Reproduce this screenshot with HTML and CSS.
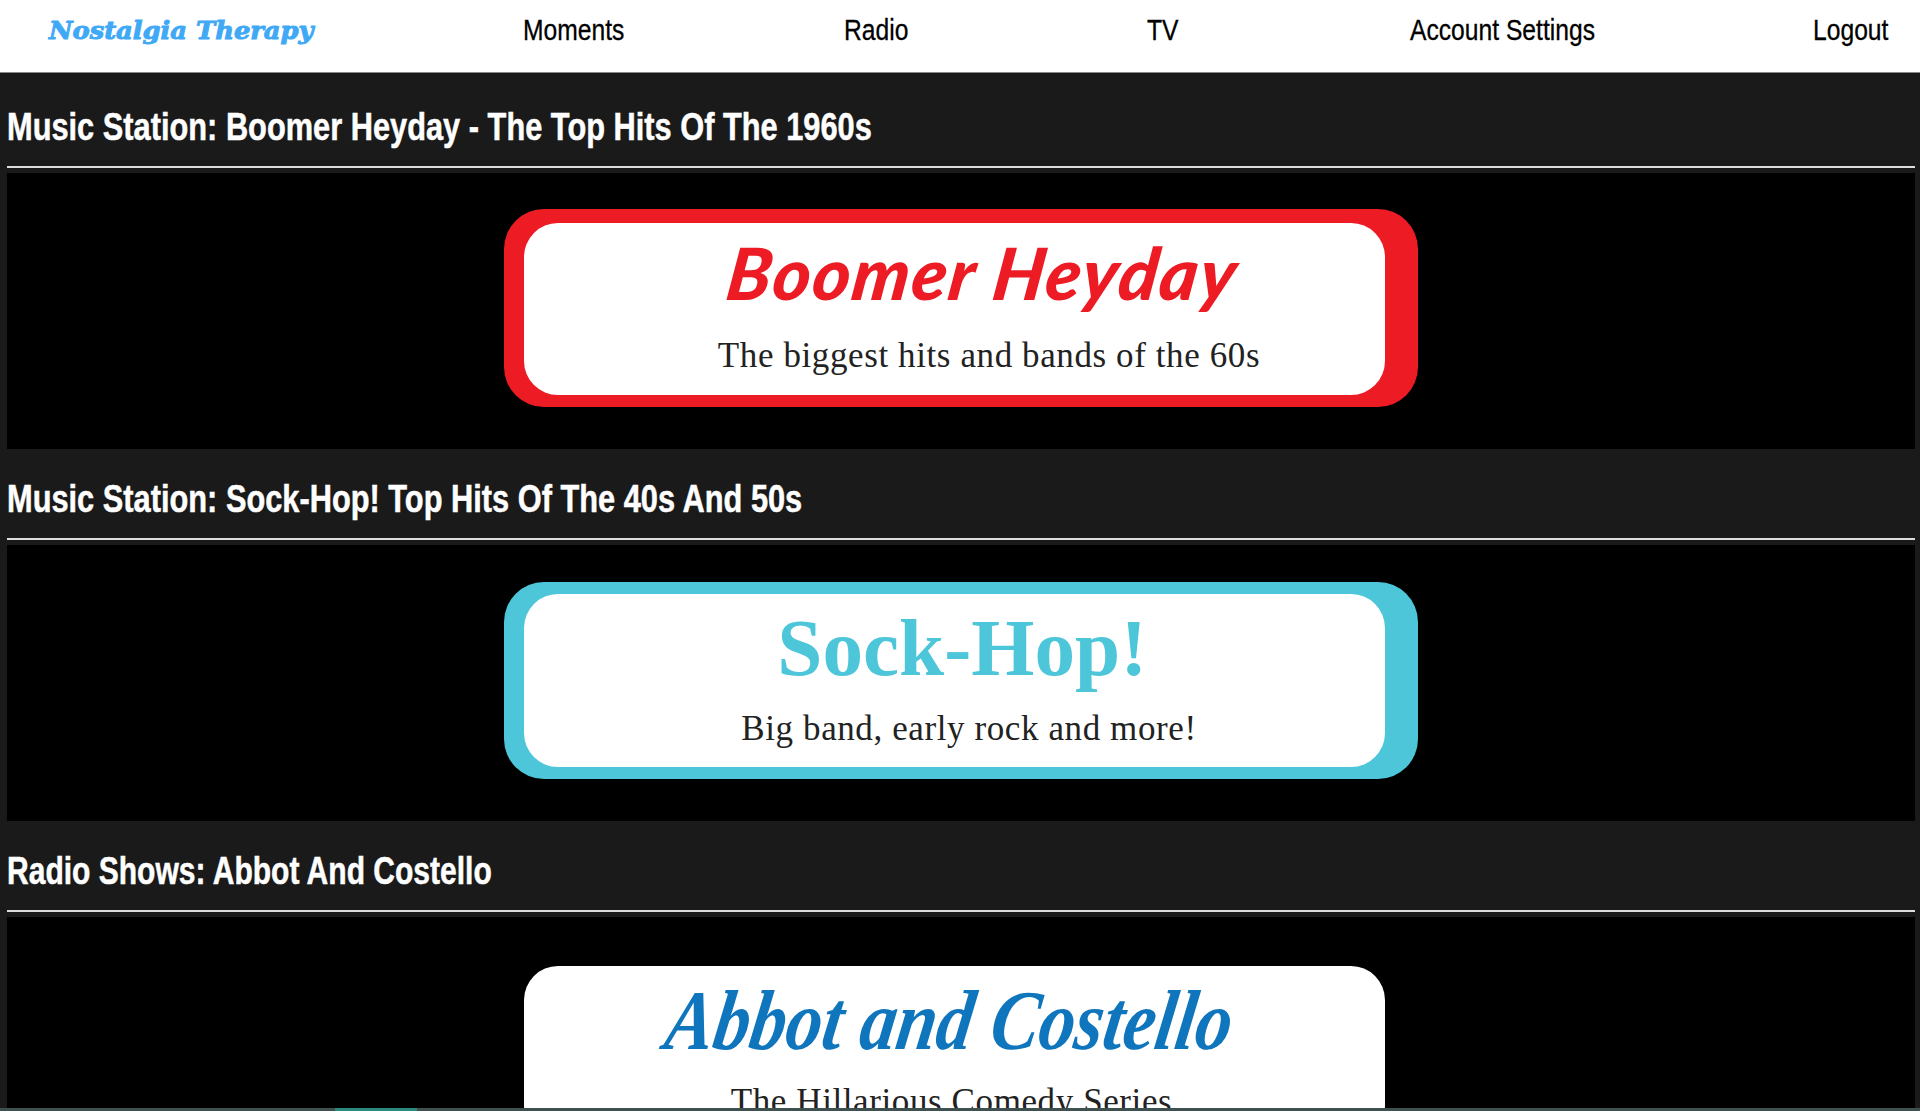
FILE: index.html
```html
<!DOCTYPE html>
<html lang="en">
<head>
  <meta charset="UTF-8">
  <title>Nostalgia Therapy</title>
  <link rel="stylesheet" href="styles.css">
</head>
<body>

  <nav class="topnav">
    <a class="brand" href="#"><span>Nostalgia Therapy</span></a>
    <a class="nav-link" href="#"><span>Moments</span></a>
    <a class="nav-link" href="#"><span>Radio</span></a>
    <a class="nav-link" href="#"><span>TV</span></a>
    <a class="nav-link" href="#"><span>Account Settings</span></a>
    <a class="nav-link" href="#"><span>Logout</span></a>
  </nav>

  <main class="content">
    <section class="station">
      <h2 class="station-title"><span>Music Station: Boomer Heyday - The Top Hits Of The 1960s</span></h2>
      <div class="station-banner">
        <div class="card card-red">
          <div class="card-inner">
            <p class="card-name"><span>Boomer Heyday</span></p>
            <p class="card-sub">The biggest hits and bands of the 60s</p>
          </div>
        </div>
      </div>
    </section>

    <section class="station">
      <h2 class="station-title"><span>Music Station: Sock-Hop! Top Hits Of The 40s And 50s</span></h2>
      <div class="station-banner">
        <div class="card card-teal">
          <div class="card-inner">
            <p class="card-name"><span>Sock-Hop!</span></p>
            <p class="card-sub">Big band, early rock and more!</p>
          </div>
        </div>
      </div>
    </section>

    <section class="station">
      <h2 class="station-title title-short"><span>Radio Shows: Abbot And Costello</span></h2>
      <div class="station-banner">
        <div class="card card-plain">
          <div class="card-inner">
            <p class="card-name"><span>Abbot and Costello</span></p>
            <p class="card-sub">The Hillarious Comedy Series</p>
          </div>
        </div>
      </div>
    </section>
  </main>

  <div class="player-bar"><div class="player-progress"></div></div>

</body>
</html>
```

FILE: styles.css
```css
html, body {
  height: 100%;
  overflow: hidden;
}

body {
  margin: 0;
  background-color: #1a1a1a;
  font-family: 'Liberation Sans', sans-serif;
}

/* no condensed family installed, so the narrow text is squeezed with scaleX */
.topnav {
  display: grid;
  grid-template-columns: 475px 321px 303px 263px 403px auto;
  align-items: center;
  box-sizing: border-box;
  height: 73px;
  padding: 0 0 12px 49px;
  background-color: #fff;
  border-bottom: 1px solid #888;
}

.topnav a {
  white-space: nowrap;
  text-decoration: none;
}

.topnav span {
  display: inline-block;
  transform-origin: left center;
}

.brand {
  font-family: 'DejaVu Serif', serif;
  font-size: 25px;
  font-weight: bold;
  font-style: italic;
  color: #3fa9f5;
}

.brand span {
  transform: scaleX(1.03);
  -webkit-text-stroke: 1px #3fa9f5;
}

.nav-link {
  margin-left: -1px;
  font-size: 29px;
  color: #000;
}

.nav-link span {
  transform: scaleX(.85);
  -webkit-text-stroke: .3px #000;
}

.content {
  padding: 4px 5px 0 7px;
}

.station-title {
  box-sizing: content-box;
  height: 78px;
  margin: 0;
  padding-top: 11px;
  line-height: 78px;
  font-size: 38px;
  font-weight: bold;
  white-space: nowrap;
  color: #fff;
  border-bottom: 2px solid #ddd;
}

.station-title span {
  display: inline-block;
  transform: scaleX(.81);
  transform-origin: left center;
  -webkit-text-stroke: .5px #fff;
}

.title-short span {
  transform: scaleX(.79);
}

.station-banner {
  height: 276px;
  margin-top: 5px;
  padding-top: 36px;
  box-sizing: border-box;
  background-color: #000;
}

.card {
  box-sizing: border-box;
  width: 914px;
  height: 198px;
  margin: 0 auto;
  padding: 14px 33px 12px 20px;
  border-radius: 40px;
  background-color: #ed1c24;
}

.card-teal {
  height: 197px;
  margin-top: 1px;
  padding-top: 12px;
  background-color: #4dc6d9;
}

.card-plain {
  padding-top: 13px;
  background-color: transparent;
}

.card-inner {
  height: 100%;
  border-radius: 34px;
  background-color: #fff;
  text-align: center;
}

.card-name {
  box-sizing: border-box;
  margin: 0;
  line-height: 90px;
  font-weight: bold;
  white-space: nowrap;
}

.card-name span {
  display: inline-block;
}

.card-sub {
  margin: 0;
  line-height: 40px;
  font-family: 'Liberation Serif', serif;
  font-size: 35px;
  letter-spacing: .6px;
  white-space: nowrap;
  color: #222;
}

.card-red .card-name {
  height: 113px;
  padding: 4px 0 0 58px;
  font-family: 'Lato', sans-serif;
  font-size: 72px;
  font-weight: 900;
  font-style: italic;
  letter-spacing: 2px;
  color: #ed1c24;
}

.card-red .card-name span {
  transform: skewX(-8deg);
}

.card-red .card-sub {
  padding-left: 69px;
}

.card-teal .card-name {
  height: 115px;
  padding: 9px 0 0 15px;
  font-family: 'Liberation Serif', serif;
  font-size: 80px;
  color: #4dc6d9;
}

.card-teal .card-name span {
  transform: scaleX(1.015);
}

.card-teal .card-sub {
  padding-left: 29px;
}

.card-plain .card-name {
  height: 116px;
  padding: 9px 10px 0 0;
  font-family: 'Liberation Serif', serif;
  font-size: 85px;
  font-style: italic;
  color: #0f75bc;
}

.card-plain .card-name span {
  transform: scaleX(.85) skewX(-10deg);
}

.card-plain .card-sub {
  padding-right: 6px;
}

.player-bar {
  position: fixed;
  left: 0;
  right: 0;
  bottom: 0;
  height: 3px;
  background-color: #3f5050;
}

.player-progress {
  width: 82px;
  height: 100%;
  margin-left: 335px;
  background-color: #2a8a80;
}
```
